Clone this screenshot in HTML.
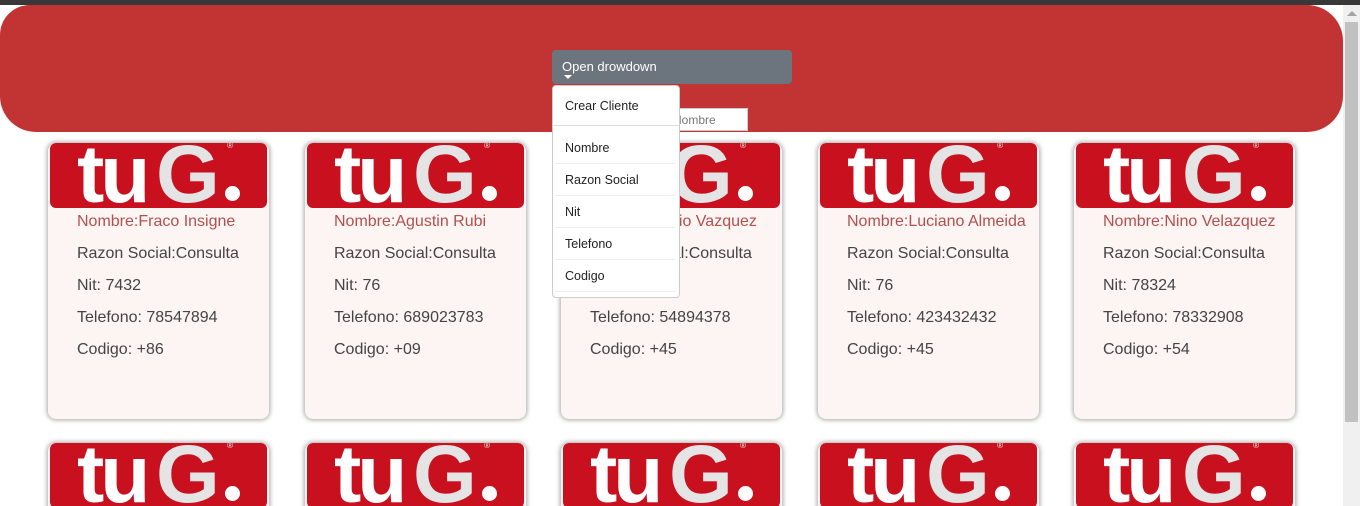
<!DOCTYPE html>
<html><head><style>
*{margin:0;padding:0;box-sizing:border-box}
html,body{width:1360px;height:506px;overflow:hidden}
body{background:#fff;font-family:"Liberation Sans",sans-serif;position:relative}
.top{position:absolute;left:0;top:0;width:1360px;height:5px;background:#383838}
.hdr{position:absolute;left:0;top:5px;width:1343px;height:127px;background:#c23333;border-radius:30px 36px 36px 36px}
.sb{position:absolute;left:1343px;top:5px;width:17px;height:501px;background:#f0f0f0}
.thumb{position:absolute;left:1345px;top:22px;width:13px;height:400px;background:#c1c1c1}
.arr{position:absolute;left:1347px;top:11px;width:0;height:0;border-left:5px solid transparent;border-right:5px solid transparent;border-bottom:5px solid #a3a3a3}
.btn{position:absolute;left:552px;top:50px;width:240px;height:34px;background:#6c757d;border-radius:4px;color:#fff;font-size:13px;padding:9px 10px}
.caret{position:absolute;left:564px;top:75px;border-left:4px solid transparent;border-right:4px solid transparent;border-top:4px solid #fff}
.inp{position:absolute;left:660px;top:108px;width:88px;height:23px;background:#fff;border:1px solid #ccc;color:#777;font-size:12px;padding:4px 0 0 12px}
.menu{position:absolute;left:552px;top:85px;width:128px;height:213px;background:#fff;border:1px solid #ccc;border-radius:4px;font-size:12.5px;color:#222}
.menu .c{position:absolute;left:12px;top:13px}
.menu .sep{position:absolute;left:0;top:39px;width:126px;height:1px;background:#ddd}
.menu .it{position:absolute;left:2px;width:120px;height:32px;border-bottom:1px solid #eee;padding:9px 0 0 10px}
.card{position:absolute;width:221px;height:276px;background:#fdf4f4;border-radius:8px;box-shadow:0 0 5px 1px rgba(0,0,0,.35);overflow:hidden}
.card.b{height:70px;border-radius:8px 8px 0 0}
.logo{position:absolute;left:2px;top:0;width:217px;height:65px;background:#c8101f;border-radius:6px;overflow:hidden}
.logo span{position:absolute;top:-18px;font-weight:bold;font-size:82px;line-height:100px}
.t{left:27px;color:#fff;letter-spacing:-4px}
.g{left:106px;color:#e4e4e4}
.d{position:absolute;left:175px;top:43px;width:15px;height:15px;border-radius:50%;background:#fff}
.r{position:absolute;left:177px;top:-2px;font-size:8px;color:#eee}
.card p{position:absolute;left:29px;font-size:16px;color:#444}
.card p.n{color:#b4504c}
</style></head><body>
<div class="top"></div>
<div class="hdr"></div>
<div class="sb"></div><div class="thumb"></div><div class="arr"></div>

<div class="card" style="left:48px;top:143px"><div class="logo"><span class="t">tu</span><span class="g">G</span><i class="d"></i><i class="r">®</i></div>
<p class="n" style="top:70px">Nombre:Fraco Insigne</p><p style="top:102px">Razon Social:Consulta</p><p style="top:134px">Nit: 7432</p><p style="top:166px">Telefono: 78547894</p><p style="top:198px">Codigo: +86</p></div>
<div class="card" style="left:305px;top:143px"><div class="logo"><span class="t">tu</span><span class="g">G</span><i class="d"></i><i class="r">®</i></div>
<p class="n" style="top:70px">Nombre:Agustin Rubi</p><p style="top:102px">Razon Social:Consulta</p><p style="top:134px">Nit: 76</p><p style="top:166px">Telefono: 689023783</p><p style="top:198px">Codigo: +09</p></div>
<div class="card" style="left:561px;top:143px"><div class="logo"><span class="t">tu</span><span class="g">G</span><i class="d"></i><i class="r">®</i></div>
<p class="n" style="top:70px">Nombre:Mario Vazquez</p><p style="top:102px">Razon Social:Consulta</p><p style="top:134px">Nit: 76</p><p style="top:166px">Telefono: 54894378</p><p style="top:198px">Codigo: +45</p></div>
<div class="card" style="left:818px;top:143px"><div class="logo"><span class="t">tu</span><span class="g">G</span><i class="d"></i><i class="r">®</i></div>
<p class="n" style="top:70px">Nombre:Luciano Almeida</p><p style="top:102px">Razon Social:Consulta</p><p style="top:134px">Nit: 76</p><p style="top:166px">Telefono: 423432432</p><p style="top:198px">Codigo: +45</p></div>
<div class="card" style="left:1074px;top:143px"><div class="logo"><span class="t">tu</span><span class="g">G</span><i class="d"></i><i class="r">®</i></div>
<p class="n" style="top:70px">Nombre:Nino Velazquez</p><p style="top:102px">Razon Social:Consulta</p><p style="top:134px">Nit: 78324</p><p style="top:166px">Telefono: 78332908</p><p style="top:198px">Codigo: +54</p></div>

<div class="card b" style="left:48px;top:443px"><div class="logo"><span class="t">tu</span><span class="g">G</span><i class="d"></i><i class="r">®</i></div></div>
<div class="card b" style="left:305px;top:443px"><div class="logo"><span class="t">tu</span><span class="g">G</span><i class="d"></i><i class="r">®</i></div></div>
<div class="card b" style="left:561px;top:443px"><div class="logo"><span class="t">tu</span><span class="g">G</span><i class="d"></i><i class="r">®</i></div></div>
<div class="card b" style="left:818px;top:443px"><div class="logo"><span class="t">tu</span><span class="g">G</span><i class="d"></i><i class="r">®</i></div></div>
<div class="card b" style="left:1074px;top:443px"><div class="logo"><span class="t">tu</span><span class="g">G</span><i class="d"></i><i class="r">®</i></div></div>

<div class="btn">Open drowdown</div><div class="caret"></div>
<div class="inp">Nombre</div>
<div class="menu"><div class="c">Crear Cliente</div><div class="sep"></div>
<div class="it" style="top:46px">Nombre</div>
<div class="it" style="top:78px">Razon Social</div>
<div class="it" style="top:110px">Nit</div>
<div class="it" style="top:142px">Telefono</div>
<div class="it" style="top:174px">Codigo</div></div>
</body></html>
